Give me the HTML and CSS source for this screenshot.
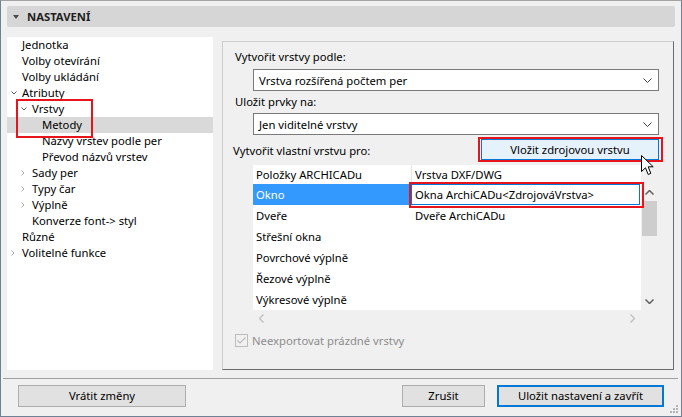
FILE: index.html
```html
<!DOCTYPE html>
<html>
<head>
<meta charset="utf-8">
<link rel="stylesheet" href="styles.css">
</head>
<body>
<div class="window">
    <div class="section-head"><span class="caret"></span>NASTAVENÍ</div>

    <div class="main">
        <div class="tree">
            <div class="item l0"><span class="tw"></span>Jednotka</div>
            <div class="item l0"><span class="tw"></span>Volby otevírání</div>
            <div class="item l0"><span class="tw"></span>Volby ukládání</div>
            <div class="item l0"><span class="tw"><svg width="6" height="4"><polyline class="open" points="0.5,0.5 3,3 5.5,0.5"/></svg></span>Atributy</div>
            <div class="item l1"><span class="tw"><svg width="6" height="4"><polyline class="open" points="0.5,0.5 3,3 5.5,0.5"/></svg></span>Vrstvy</div>
            <div class="item l2 current"><span class="tw"></span>Metody</div>
            <div class="item l2"><span class="tw"></span>Názvy vrstev podle per</div>
            <div class="item l2"><span class="tw"></span>Převod názvů vrstev</div>
            <div class="item l1"><span class="tw"><svg width="4" height="6"><polyline class="closed" points="0.5,0.5 3,3 0.5,5.5"/></svg></span>Sady per</div>
            <div class="item l1"><span class="tw"><svg width="4" height="6"><polyline class="closed" points="0.5,0.5 3,3 0.5,5.5"/></svg></span>Typy čar</div>
            <div class="item l1"><span class="tw"><svg width="4" height="6"><polyline class="closed" points="0.5,0.5 3,3 0.5,5.5"/></svg></span>Výplně</div>
            <div class="item l1"><span class="tw"></span>Konverze font-&gt; styl</div>
            <div class="item l0"><span class="tw"></span>Různé</div>
            <div class="item l0"><span class="tw"><svg width="4" height="6"><polyline class="closed" points="0.5,0.5 3,3 0.5,5.5"/></svg></span>Volitelné funkce</div>
            <div class="mark tree-mark"></div>
        </div>

        <div class="panel">
            <div class="label first">Vytvořit vrstvy podle:</div>
            <div class="select">
                <span>Vrstva rozšířená počtem per</span>
                <svg class="drop" width="9" height="5"><polyline points="0.5,0.5 4.5,4.5 8.5,0.5"/></svg>
            </div>
            <div class="label">Uložit prvky na:</div>
            <div class="select">
                <span>Jen viditelné vrstvy</span>
                <svg class="drop" width="9" height="5"><polyline points="0.5,0.5 4.5,4.5 8.5,0.5"/></svg>
            </div>

            <div class="own-row">
                <div class="label own">Vytvořit vlastní vrstvu pro:</div>
                <div class="btn-wrap">
                    <div class="btn-source">Vložit zdrojovou vrstvu</div>
                    <div class="mark btn-mark"></div>
                </div>
            </div>

            <div class="list">
                <div class="hd first-col">Položky ARCHICADu</div>
                <div class="hd">Vrstva DXF/DWG</div>
                <div class="corner"></div>

                <div class="vscroll">
                    <div class="sb-btn"><svg width="9" height="5"><polyline points="0.5,4.5 4.5,0.5 8.5,4.5"/></svg></div>
                    <div class="thumb"></div>
                    <div class="sb-space"></div>
                    <div class="sb-btn"><svg width="9" height="5"><polyline points="0.5,0.5 4.5,4.5 8.5,0.5"/></svg></div>
                </div>

                <div class="cell sel">Okno</div>
                <div class="cell"><div class="editbox">Okna ArchiCADu&lt;ZdrojováVrstva&gt;<div class="mark edit-mark"></div></div></div>
                <div class="cell">Dveře</div>
                <div class="cell">Dveře ArchiCADu</div>
                <div class="cell">Střešní okna</div>
                <div class="cell"></div>
                <div class="cell">Povrchové výplně</div>
                <div class="cell"></div>
                <div class="cell">Řezové výplně</div>
                <div class="cell"></div>
                <div class="cell">Výkresové výplně</div>
                <div class="cell"></div>

                <div class="hscroll">
                    <svg width="5" height="9"><polyline points="4.5,0.5 0.5,4.5 4.5,8.5"/></svg>
                    <svg width="5" height="9"><polyline points="0.5,0.5 4.5,4.5 0.5,8.5"/></svg>
                </div>
            </div>

            <div class="check-row">
                <span class="checkbox"><svg width="11" height="11"><polyline points="1.5,5.5 4,8 9.5,2.5"/></svg></span>
                <span>Neexportovat prázdné vrstvy</span>
            </div>
        </div>
    </div>

    <div class="footer">
        <div class="btn revert">Vrátit změny</div>
        <div class="btn cancel">Zrušit</div>
        <div class="btn ok">Uložit nastavení a zavřít</div>
    </div>

    <svg class="grip" width="10" height="10">
        <rect x="7" y="1" width="2" height="2"/>
        <rect x="4" y="4" width="2" height="2"/>
        <rect x="7" y="4" width="2" height="2"/>
        <rect x="1" y="7" width="2" height="2"/>
        <rect x="4" y="7" width="2" height="2"/>
        <rect x="7" y="7" width="2" height="2"/>
    </svg>

    <svg class="cursor" width="14" height="21">
        <path d="M0.5,0.5 V16.5 L4.5,12.8 L7.2,19.5 L9.8,18.4 L7.2,11.8 H12.2 Z"/>
    </svg>
</div>
</body>
</html>
```

FILE: styles.css
```css
* {
    box-sizing: border-box;
}
html, body {
    margin: 0;
    padding: 0;
}
body {
    width: 682px;
    height: 417px;
    overflow: hidden;
    background: #f0f0f0;
    font-family: "Noto Sans", "Open Sans", sans-serif;
    font-size: 11.25px;
    color: #000;
}
.window {
    position: relative;
    width: 682px;
    height: 417px;
    border: 1px solid #6f8194;
    border-top-color: #a3a3a3;
    background: #f0f0f0;
}

/* header */
.section-head {
    display: flex;
    align-items: center;
    width: 668px;
    height: 21px;
    margin: 5px 0 0 6px;
    padding-left: 6px;
    background: #d6d6d6;
    border-radius: 2px;
    font-weight: bold;
    color: #1e1e1e;
}
.caret {
    width: 0;
    height: 0;
    margin-right: 8px;
    border-left: 3px solid transparent;
    border-right: 3px solid transparent;
    border-top: 4px solid #4a4a4a;
}

.main {
    display: flex;
    align-items: flex-start;
    margin: 10px 0 0 6px;
}

/* tree */
.tree {
    position: relative;
    width: 206px;
    height: 333px;
    background: #fff;
}
.item {
    display: flex;
    align-items: center;
    height: 16px;
    line-height: 16px;
    white-space: nowrap;
}
.item.l0 { padding-left: 4px; }
.item.l1 { padding-left: 14px; }
.item.l2 { padding-left: 24px; }
.item.current {
    background: #d9d9d9;
}
.tw {
    display: flex;
    align-items: center;
    width: 11px;
    height: 16px;
}
.tw svg {
    display: block;
}
.tw polyline {
    fill: none;
    stroke-width: 1;
}
.tw .open {
    stroke: #5a5a5a;
}
.tw .closed {
    stroke: #a8a8a8;
}

.mark {
    position: absolute;
    border: 2px solid #e8141c;
    pointer-events: none;
}
.tree-mark {
    left: 9px;
    top: 62px;
    width: 77px;
    height: 39px;
}

/* right panel */
.panel {
    width: 452px;
    height: 329px;
    margin: 4px 0 0 9px;
    border: 1px solid;
    border-color: #cdcdcd #6b6b6b #6b6b6b #cdcdcd;
}
.label {
    height: 16px;
    line-height: 16px;
    margin: 3px 0 0 12px;
    white-space: nowrap;
}
.label.first {
    margin-top: 7px;
}
.select {
    display: flex;
    align-items: center;
    justify-content: space-between;
    width: 406px;
    height: 22px;
    margin: 3px 0 0 30px;
    padding: 0 6px 0 5px;
    background: #fff;
    border: 1px solid #7a7a7a;
}
.label.first + .select {
    margin-top: 4px;
}
.drop polyline {
    fill: none;
    stroke: #3c3c3c;
}

.own-row {
    display: flex;
    align-items: center;
    margin-top: 4px;
}
.label.own {
    margin: 0 0 0 10px;
    padding-top: 2px;
    height: 18px;
}
.btn-wrap {
    position: relative;
    margin: 0 14px 0 auto;
}
.btn-source {
    width: 178px;
    height: 21px;
    line-height: 19px;
    text-align: center;
    background: #e5f1fb;
    border: 1px solid #0078d7;
}
.btn-mark {
    left: -3px;
    top: -2px;
    right: -4px;
    bottom: -2px;
}

/* list */
.list {
    display: grid;
    grid-template-columns: 159px 229px 16px;
    grid-template-rows: 19px repeat(6, 21px) 16px;
    width: 404px;
    margin: 5px 0 0 30px;
}
.hd, .cell {
    background: #fff;
    padding-left: 3px;
    white-space: nowrap;
    overflow: visible;
}
.hd {
    line-height: 19px;
}
.hd.first-col {
    border-right: 1px solid #e5e5e5;
}
.cell {
    line-height: 21px;
}
.cell.sel {
    background: #3399ff;
    color: #fff;
}
.editbox {
    position: relative;
    width: 229px;
    height: 21px;
    margin-left: -4px;
    padding-left: 3px;
    line-height: 19px;
    border: 1px solid #0078d7;
    background: #fff;
}
.edit-mark {
    left: -3px;
    top: -3px;
    right: -5px;
    bottom: -4px;
}
.vscroll {
    grid-column: 3;
    grid-row: 2 / span 6;
    display: flex;
    flex-direction: column;
}
.sb-btn {
    height: 17px;
    display: flex;
    align-items: center;
    justify-content: center;
}
.sb-btn polyline {
    fill: none;
    stroke: #606060;
    stroke-width: 1.5;
}
.thumb {
    height: 35px;
    margin-left: 1px;
    background: #cdcdcd;
}
.sb-space {
    flex: 1;
}
.hscroll {
    grid-column: 1 / span 2;
    display: flex;
    align-items: center;
    justify-content: space-between;
    padding: 0 6px 0 6px;
}
.hscroll polyline {
    fill: none;
    stroke: #c2c2c2;
    stroke-width: 1.5;
}

.check-row {
    display: flex;
    align-items: center;
    height: 16px;
    margin: 6px 0 0 12px;
    color: #8d8d8d;
}
.checkbox {
    display: flex;
    align-items: center;
    justify-content: center;
    width: 13px;
    height: 13px;
    margin-right: 4px;
    border: 1px solid #bcbcbc;
}
.checkbox polyline {
    fill: none;
    stroke: #bcbcbc;
    stroke-width: 1.2;
}

/* footer */
.footer {
    display: flex;
    align-items: flex-start;
    height: 37px;
    margin: 8px 3px 0 2px;
    padding: 6px 14px 0 15px;
    border-top: 1px solid #a0a0a0;
}
.btn {
    height: 22px;
    line-height: 20px;
    text-align: center;
    background: #e1e1e1;
    border: 1px solid #adadad;
}
.btn.revert {
    width: 168px;
    margin-right: auto;
}
.btn.cancel {
    width: 83px;
    margin-right: 12px;
}
.btn.ok {
    width: 167px;
    line-height: 18px;
    border: 2px solid #0078d7;
}

.grip {
    position: absolute;
    right: 2px;
    bottom: 2px;
}
.grip rect {
    fill: #b4b4b4;
}
.cursor {
    position: absolute;
    left: 640px;
    top: 154px;
}
.cursor path {
    fill: #fff;
    stroke: #000;
    stroke-width: 1;
}
```
